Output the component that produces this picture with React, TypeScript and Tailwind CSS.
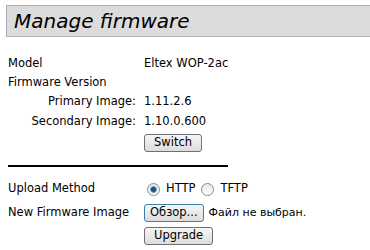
const font = { fontFamily: '"DejaVu Sans", Verdana, sans-serif' };

const Btn: React.FC<{ label: string; focused?: boolean; className?: string }> = ({ label, focused, className }) => (
    <button
        className={`h-[18px] text-[11.5px] leading-none text-black rounded-[3px] border bg-gradient-to-b from-[#f6f6f6] to-[#dcdcdc] ${
            focused ? "border-[#3c7fb1]" : "border-[#707070]"
        } ${className ?? "px-[9px]"}`}
    >
        {label}
    </button>
);

const Radio: React.FC<{ checked?: boolean }> = ({ checked }) => (
    <span className="w-[13px] h-[13px] rounded-full border border-[#8a8a8a] bg-gradient-to-b from-[#e8e8e8] to-[#ffffff] flex items-center justify-center">
        {checked && <span className="w-[7px] h-[7px] rounded-full bg-[#1a4f7a] border border-[#5fa3d8]" />}
    </span>
);

export default function App() {
    return (
        <div className="w-[370px] h-[250px] bg-white text-[11.5px] text-black overflow-hidden" style={font}>
            <div className="ml-[6px] mt-[5px] h-[32px] bg-[#dcdcdc] border border-[#aab0be] border-r-0 flex items-center pl-[7px]">
                <span className="italic text-[20px] leading-none text-black">Manage firmware</span>
            </div>

            <div className="pl-[8px] pt-[17px]">
                <div className="flex h-[19px] items-center">
                    <span className="w-[136px]">Model</span>
                    <span>Eltex WOP-2ac</span>
                </div>
                <div className="flex h-[19px] items-center">
                    <span>Firmware Version</span>
                </div>
                <div className="flex h-[20px] items-center">
                    <span className="w-[128px] text-right">Primary Image:</span>
                    <span className="ml-[8px]">1.11.2.6</span>
                </div>
                <div className="flex h-[20px] items-center">
                    <span className="w-[128px] text-right">Secondary Image:</span>
                    <span className="ml-[8px]">1.10.0.600</span>
                </div>
                <div className="flex h-[22px] items-center pl-[136px]">
                    <Btn label="Switch" />
                </div>
                <div className="mt-[11px] w-[220px] h-[2px] bg-black" />
                <div className="flex h-[24px] items-center mt-[10px]">
                    <span className="w-[139px]">Upload Method</span>
                    <Radio checked />
                    <span className="ml-[6px]">HTTP</span>
                    <span className="ml-[6px]"><Radio /></span>
                    <span className="ml-[6px]">TFTP</span>
                </div>
                <div className="flex h-[24px] items-center">
                    <span className="w-[136px]">New Firmware Image</span>
                    <Btn label="Обзор..." focused className="px-[5px]" />
                    <span className="ml-[5px] text-[11px]">Файл не выбран.</span>
                </div>
                <div className="flex h-[22px] items-center pl-[136px]">
                    <Btn label="Upgrade" />
                </div>
            </div>
        </div>
    );
}
